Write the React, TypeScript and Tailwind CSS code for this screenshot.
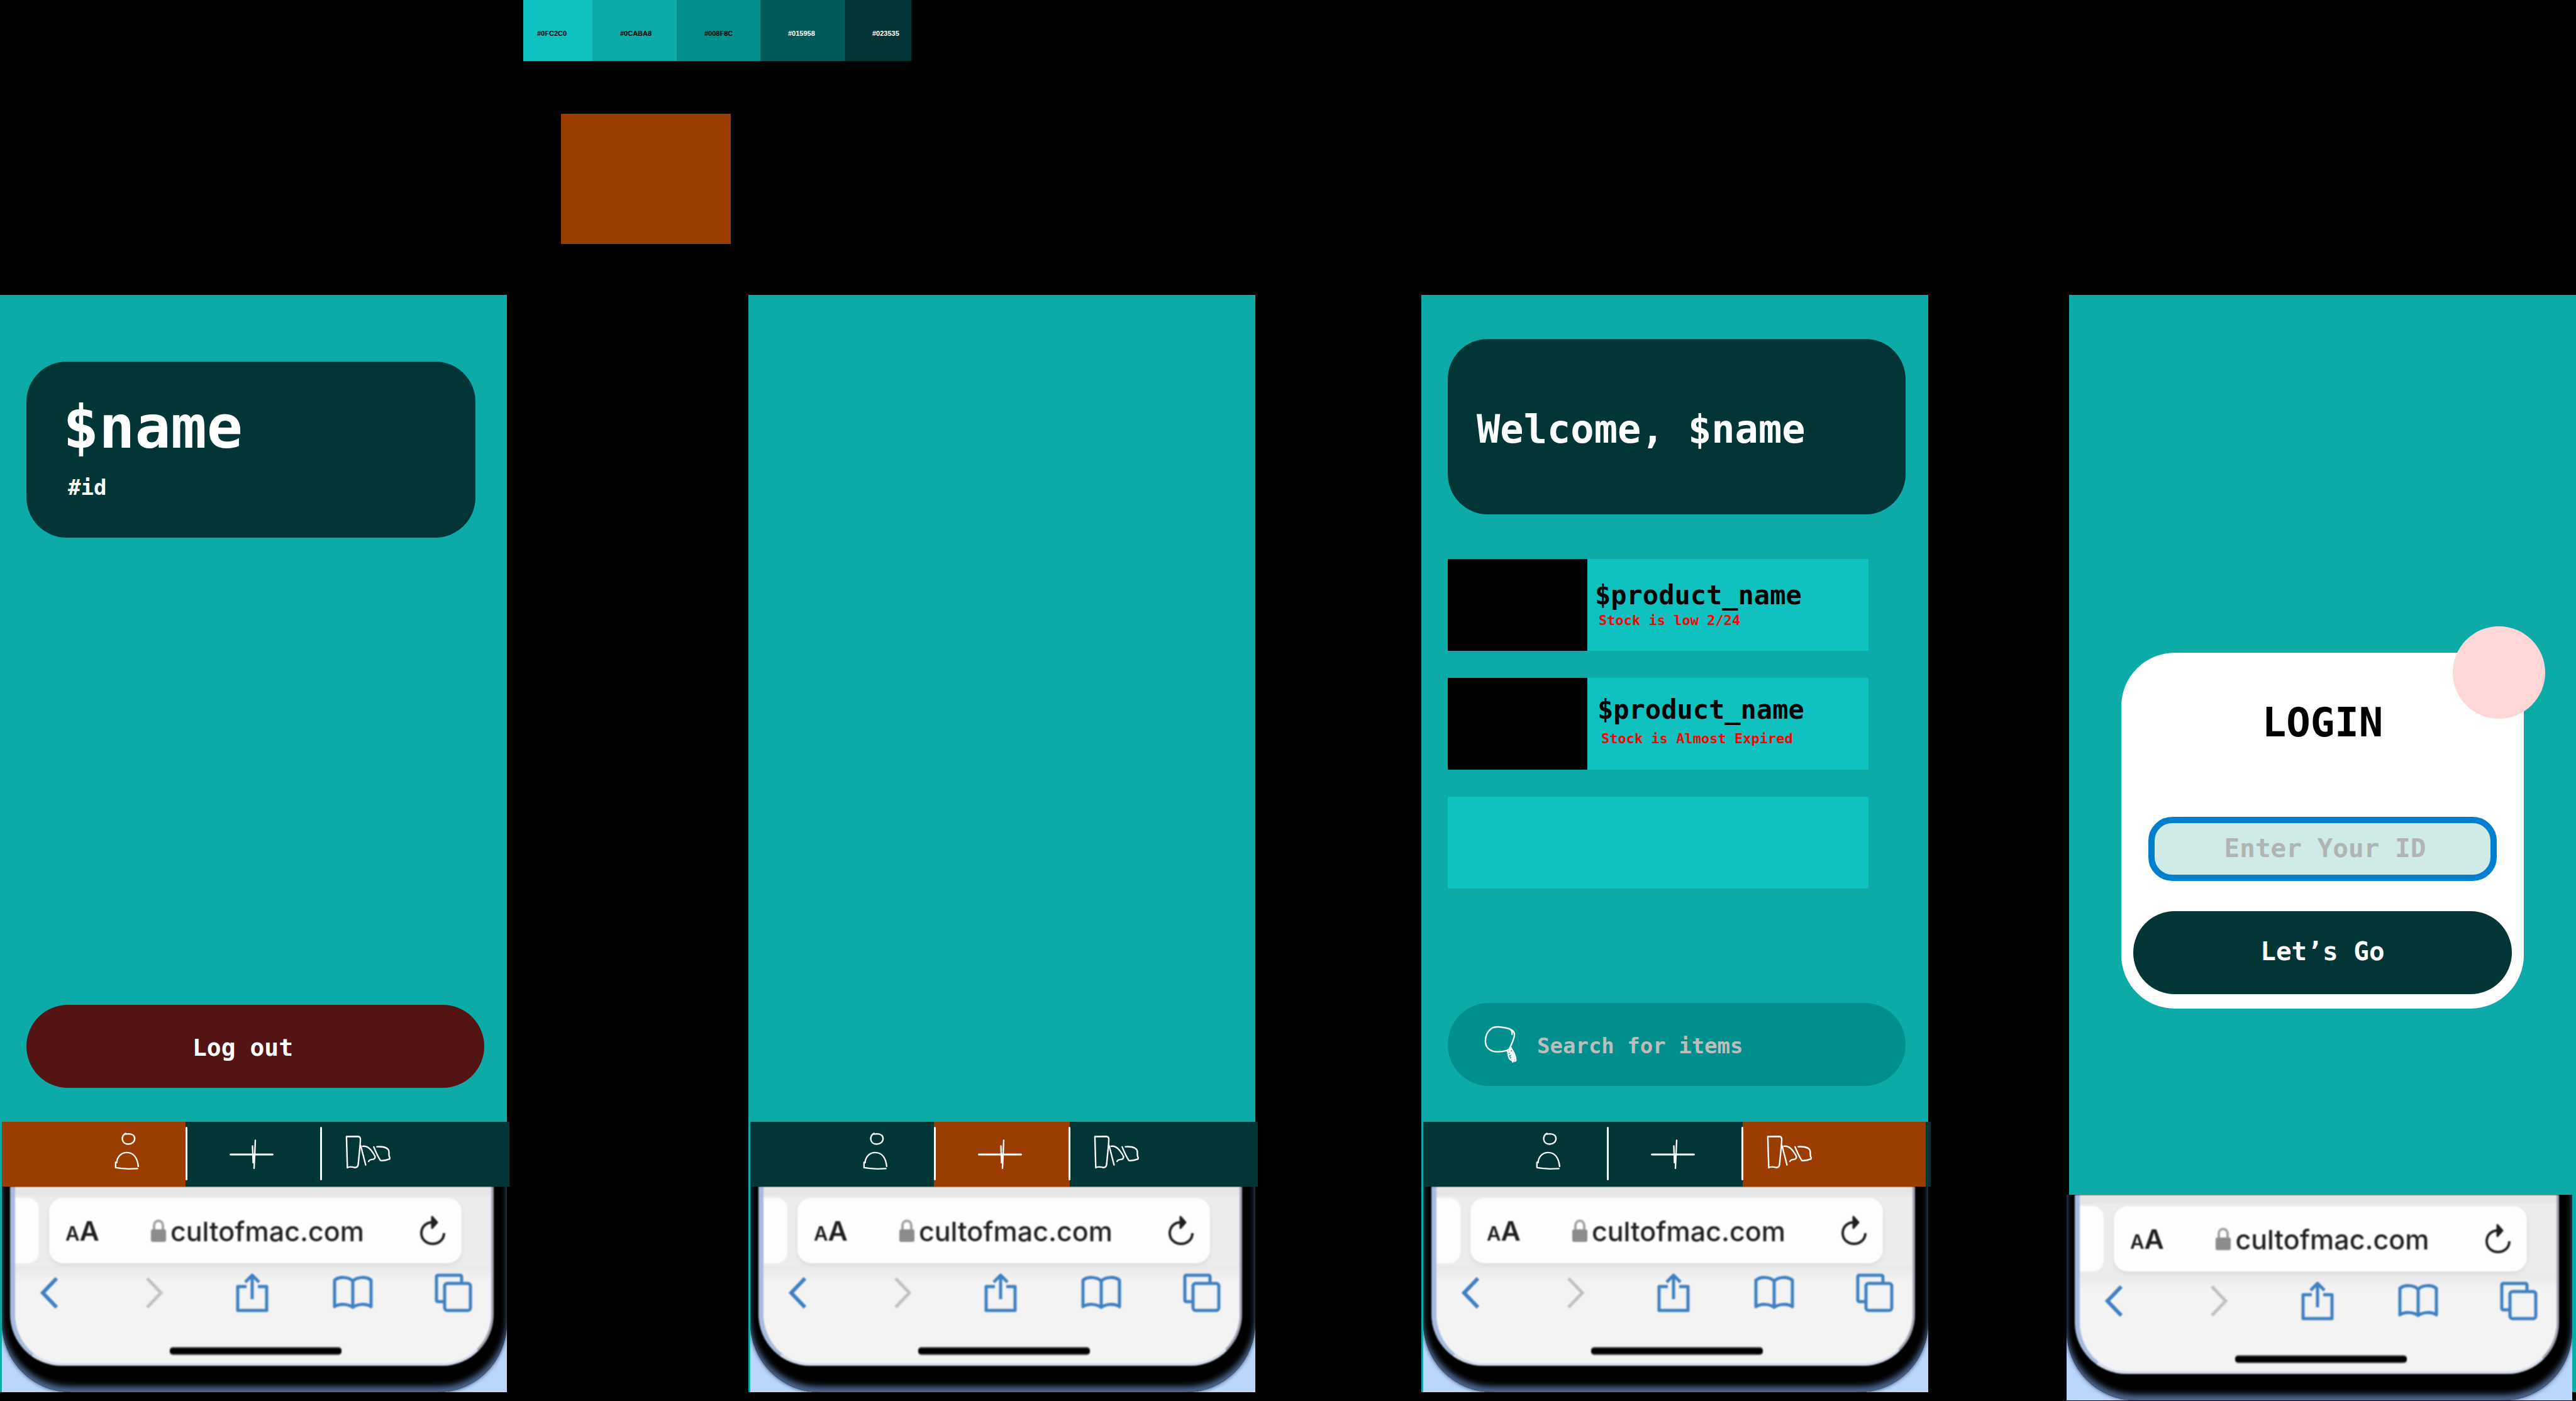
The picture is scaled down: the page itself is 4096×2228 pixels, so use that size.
import { ReactNode } from "react";

const mono = "font-['DejaVu_Sans_Mono',monospace] font-bold";

const swatches = [
  { hex: "#0FC2C0", style: "bg-[#0fc2c0] text-black pl-[22px]" },
  { hex: "#0CABA8", style: "bg-[#0caba8] text-black pl-[44px]" },
  { hex: "#008F8C", style: "bg-[#008f8c] text-black pl-[44px]" },
  { hex: "#015958", style: "bg-[#015958] text-white pl-[44px]" },
  { hex: "#023535", style: "bg-[#023535] text-white pl-[44px]" },
];

const products = [
  { name: "$product_name", note: "Stock is low 2/24", style: "pl-3 pt-[37px] gap-2" },
  { name: "$product_name", note: "Stock is Almost Expired", style: "pl-4 pt-[30px] gap-[14px]" },
];

function Palette() {
  return (
    <div className="grid h-[97px] grid-cols-[110fr_134fr_133fr_134fr_106fr] overflow-hidden">
      {swatches.map((s) => (
        <div key={s.hex} className={`flex items-end pb-[37px] ${s.style}`}>
          <span className="font-['Liberation_Sans_Narrow','Liberation_Sans',sans-serif] text-[11px] leading-[14px] font-bold">
            {s.hex}
          </span>
        </div>
      ))}
    </div>
  );
}

function PersonIcon() {
  return (
    <svg viewBox="100 85 172 256" className="h-[61px] w-[41px]" fill="none" stroke="currentColor" strokeWidth="10" strokeLinecap="round" strokeLinejoin="round">
      <path d="M179 95C164 102 154 119 157 136C160 154 176 167 197 167C220 167 238 152 239 131C240 112 225 98 200 98L176 100" />
      <path d="M119 290C122 252 148 223 186 223C231 223 257 258 263 315" />
      <path d="M119 289L112 288L112 324C135 328 165 331 200 332L258 330" />
    </svg>
  );
}

function PlusIcon() {
  return (
    <svg viewBox="0 0 70 47" className="h-[47px] w-[70px]" fill="none" stroke="currentColor" strokeWidth="2.4" strokeLinecap="round">
      <path d="M1.5 24H68.500" strokeWidth="3" />
      <path d="M41 1.500L39 46" />
      <path d="M36.500 10.500L37.600 38L39 25" />
    </svg>
  );
}

function ShelfIcon() {
  return (
    <svg viewBox="78 106 302 224" className="h-[54px] w-[72px]" fill="none" stroke="currentColor" strokeWidth="10" strokeLinecap="round" strokeLinejoin="round">
      <path d="M92 323L86 115L162 114C175 115 180 125 179 138L177 172L164 303C161 319 150 323 138 321C120 317 108 312 92 323" />
      <path d="M181 176L214 304" />
      <path d="M194 180C216 176 234 187 250 206C262 222 274 240 277 249C278 262 268 267 257 268C244 270 236 274 234 281" />
      <path d="M268 184C280 214 292 244 313 275C334 277 356 272 374 265L375 255C366 246 371 232 369 215C366 194 340 180 289 183" />
    </svg>
  );
}

function SearchIcon() {
  return (
    <svg viewBox="58 68 220 252" className="h-[60px] w-[52px] shrink-0 text-white" fill="none" stroke="currentColor" strokeWidth="10" strokeLinecap="round" strokeLinejoin="round">
      <path d="M233 212C250 172 264 148 261 122C258 98 232 89 200 82C165 74 128 70 104 88C78 108 65 144 66 178C68 210 90 233 122 241C148 245 185 242 209 235C222 230 229 224 233 212" />
      <path d="M238 97C246 104 247 114 245 126" />
      <path d="M213 236C222 258 219 282 232 295C242 302 250 300 250 312L250 286L260 306L270 304C272 286 262 258 252 240L238 216L222 232L240 226L224 246L250 244L228 262L258 256L238 276L262 270L240 290L266 284L254 298" />
    </svg>
  );
}

type Tab = "profile" | "add" | "shelf";

function NavBar({ active }: { active: Tab }) {
  const on = "bg-[#9b3d00]";
  return (
    <nav className="-mr-1 ml-[3px] grid h-[103px] grid-cols-[292fr_216fr_299fr] bg-[#023535] text-white">
      <button aria-label="Profile" className={`flex items-start justify-end pt-4 pr-[73px] ${active === "profile" ? on : ""}`}>
        <PersonIcon />
      </button>
      <button aria-label="Add" className={`relative flex items-start justify-center pt-7 pr-[6px] ${active === "add" ? on : ""}`}>
        <span className="absolute top-2 left-0 h-[85px] w-[3px] rounded bg-white" />
        <PlusIcon />
        <span className="absolute top-2 -right-[1px] z-10 h-[85px] w-[3px] rounded bg-white" />
      </button>
      <button aria-label="Shelf" className={`flex items-start pt-[21px] pl-[38px] ${active === "shelf" ? "mr-2 bg-[#9b3d00]" : ""}`}>
        <ShelfIcon />
      </button>
    </nav>
  );
}

function BrowserChrome({ className }: { className: string }) {
  return (
    <div className={`h-[327px] overflow-hidden bg-[#bad6fc] ${className}`}>
      <div className="h-full rounded-b-[110px] bg-black px-[13px] pr-[21px] shadow-[inset_0_-9px_10px_#4e668f,0_0_6px_#2c4166]">
        <div className="h-[285px] overflow-hidden rounded-b-[82px] border-r-4 border-b-4 border-l-8 border-r-[#a3a3b3] border-b-[#d4dbec] border-l-[#a9bbdd] bg-[#f3f3f3] font-['Inter',sans-serif] blur-[1px]">
          <div className="h-[14px] bg-[#e6e6e6]" />
          <div className="flex h-[112px] items-center gap-4 bg-[#ececec] pr-[47px]">
            <div className="h-[104px] w-[38px] shrink-0 rounded-r-[18px] bg-[#fdfdfd]" />
            <div className="flex h-[104px] min-w-0 flex-1 items-center rounded-[22px] bg-[#fdfdfd] pr-[26px] pl-[26px] text-[#1f1f1f] shadow-[0_3px_6px_#d8d8d8]">
              <button aria-label="Text size" className="flex items-baseline pt-1 font-semibold">
                <span className="text-[31px] leading-[52px]">A</span>
                <span className="text-[43px] leading-[52px]">A</span>
              </button>
              <div className="flex flex-1 items-center justify-center gap-[6px] pt-[2px] pr-2">
                <svg viewBox="0 0 26 38" className="h-[38px] w-[26px]">
                  <path d="M6 18V10C6 0 20 0 20 10V18" fill="none" stroke="#a3a3a3" strokeWidth="4" />
                  <rect x="1" y="16" width="24" height="20" rx="3" fill="#8c8c8c" />
                </svg>
                <span className="text-[43px] leading-[52px] font-medium">cultofmac.com</span>
              </div>
              <button aria-label="Reload">
                <svg viewBox="0 0 40 48" className="h-[48px] w-[40px]" fill="none" stroke="currentColor" strokeWidth="4" strokeLinejoin="round">
                  <path d="M21 11C9 10 2 19 2 28C2 38 10 45 20 45C30 45 38 38 38 28" />
                  <path d="M19 2L27 11L19 20Z" fill="currentColor" strokeWidth="3" />
                </svg>
              </button>
            </div>
          </div>
          <div className="flex h-[86px] items-center justify-between bg-linear-to-b from-[#e9e9e9] to-[#f3f3f3] to-30% pr-[30px] pl-[39px] text-[#3f80c0]">
            <button aria-label="Back">
              <svg viewBox="0 0 30 50" className="h-[50px] w-[30px]" fill="none" stroke="currentColor" strokeWidth="6">
                <path d="M27 2L5 25L27 48" />
              </svg>
            </button>
            <button aria-label="Forward" className="ml-10 text-[#c0c0c0]">
              <svg viewBox="0 0 30 50" className="h-[50px] w-[30px]" fill="none" stroke="currentColor" strokeWidth="5">
                <path d="M3 2L25 25L3 48" />
              </svg>
            </button>
            <button aria-label="Share" className="ml-4">
              <svg viewBox="0 0 52 64" className="h-[64px] w-[52px]" fill="none" stroke="currentColor" strokeWidth="5" strokeLinejoin="round">
                <path d="M17 22H3V60H49V22H35" />
                <path d="M26 42V5M15 15L26 4L37 15" />
              </svg>
            </button>
            <button aria-label="Bookmarks" className="ml-1">
              <svg viewBox="0 0 64 54" className="h-[54px] w-[64px]" fill="none" stroke="currentColor" strokeWidth="5" strokeLinejoin="round">
                <path d="M32 8C24 1 10 1 3 7V49C11 44 24 44 32 50C40 44 53 44 61 49V7C54 1 40 1 32 8V50" />
              </svg>
            </button>
            <button aria-label="Tabs">
              <svg viewBox="0 0 60 62" className="h-[62px] w-[60px]" fill="none" stroke="currentColor" strokeWidth="5" strokeLinejoin="round">
                <path d="M14 45H6Q3 45 3 42V6Q3 3 6 3H40Q43 3 43 6V15" />
                <rect x="16" y="16" width="41" height="43" rx="4" />
              </svg>
            </button>
          </div>
          <div className="pl-2">
            <div className="mx-auto mt-[43px] h-[13px] w-[273px] rounded-[5px] border-y-2 border-[#5e5e5e] bg-black" />
          </div>
        </div>
      </div>
    </div>
  );
}

function Phone({ active, children }: { active: Tab; children?: ReactNode }) {
  return (
    <section className="flex flex-col bg-[#0caba8]">
      <div className="flex min-h-[1315px] flex-col pr-9 pl-[42px]">{children}</div>
      <NavBar active={active} />
      <BrowserChrome className="ml-[3px]" />
    </section>
  );
}

function ProfileScreen() {
  return (
    <Phone active="profile">
      <header className="mt-[106px] mr-[14px] flex h-[280px] flex-col gap-[31px] rounded-[64px] bg-[#023535] pt-[57px] pl-[58px] text-white">
        <h1 className="text-[95px] leading-[95px]">$name</h1>
        <p className="pl-2 text-[34px] leading-[34px]">#id</p>
      </header>
      <button className="mt-auto mb-[54px] h-[132px] rounded-full bg-[#541414] pt-1 pr-10 text-[38px] leading-[38px] text-white">
        Log out
      </button>
    </Phone>
  );
}

function HomeScreen() {
  return (
    <Phone active="shelf">
      <header className="mt-[70px] flex h-[279px] items-center rounded-[64px] bg-[#023535] pt-2 pl-[46px] text-white">
        <h1 className="text-[62px] leading-[62px] whitespace-nowrap">Welcome, $name</h1>
      </header>
      <ul className="mt-[71px] mr-[59px] flex flex-col gap-[43px]">
        {products.map((p) => (
          <li key={p.note} className="flex h-[146px] bg-[#0fc2c0]">
            <div className="w-[222px] shrink-0 bg-black" />
            <div className={`flex flex-col whitespace-nowrap ${p.style}`}>
              <h2 className="text-[42px] leading-[42px] text-black">{p.name}</h2>
              <p className="pl-[6px] text-[22px] leading-[22px] text-[#ff0000]">{p.note}</p>
            </div>
          </li>
        ))}
        <li className="h-[146px] rounded-[2px] bg-[#0fc2c0]" />
      </ul>
      <label className="mt-auto mb-[57px] flex h-[132px] items-center gap-8 rounded-full bg-[#008f8c] pr-10 pl-[58px]">
        <SearchIcon />
        <input
          type="search"
          aria-label="Search for items"
          placeholder="Search for items"
          className="h-[60px] min-w-0 flex-1 bg-transparent pt-1 text-[34px] text-white outline-none placeholder:text-[#bdbdbd]"
        />
      </label>
    </Phone>
  );
}

function LoginScreen() {
  return (
    <section className="flex flex-col bg-[#0caba8]">
      <div className="min-h-[1431px] px-[83px] pt-[569px]">
        <form className="relative flex h-[566px] flex-col rounded-[85px] bg-white pt-[79px]">
          <span className="absolute -top-[42px] -right-[34px] size-[147px] rounded-full bg-[#ffd7d7]" />
          <h1 className="text-center text-[64px] leading-[64px] text-black">LOGIN</h1>
          <input
            aria-label="Enter Your ID"
            placeholder="Enter Your ID"
            className="mx-[43px] mt-[118px] h-[102px] rounded-[38px] border-[10px] border-[#007fce] bg-[#d0eae8] pb-[2px] pl-2 text-center text-[41px] text-black outline-none placeholder:text-[#b0b4b3]"
          />
          <button type="button" className="mx-[19px] mt-[48px] h-[132px] rounded-full bg-[#023535] pb-1 text-[41px] leading-[41px] text-white">
            Let’s Go
          </button>
        </form>
      </div>
      <BrowserChrome className="-mb-[13px] mr-[6px] -ml-1" />
    </section>
  );
}

export default function App() {
  return (
    <div className={`min-h-screen overflow-hidden bg-black ${mono}`}>
      <div className="grid grid-cols-[832fr_617fr_2647fr]">
        <div className="col-start-2">
          <Palette />
          <div className="mt-[84px] ml-[60px] h-[207px] w-[270px] bg-[#9b3d00]" />
        </div>
      </div>
      <main className="mt-[81px] grid grid-cols-[806fr_384fr_806fr_264fr_806fr_224fr_806fr] pb-[14px] *:min-w-0">
        <ProfileScreen />
        <div />
        <Phone active="add" />
        <div />
        <HomeScreen />
        <div />
        <LoginScreen />
      </main>
    </div>
  );
}
